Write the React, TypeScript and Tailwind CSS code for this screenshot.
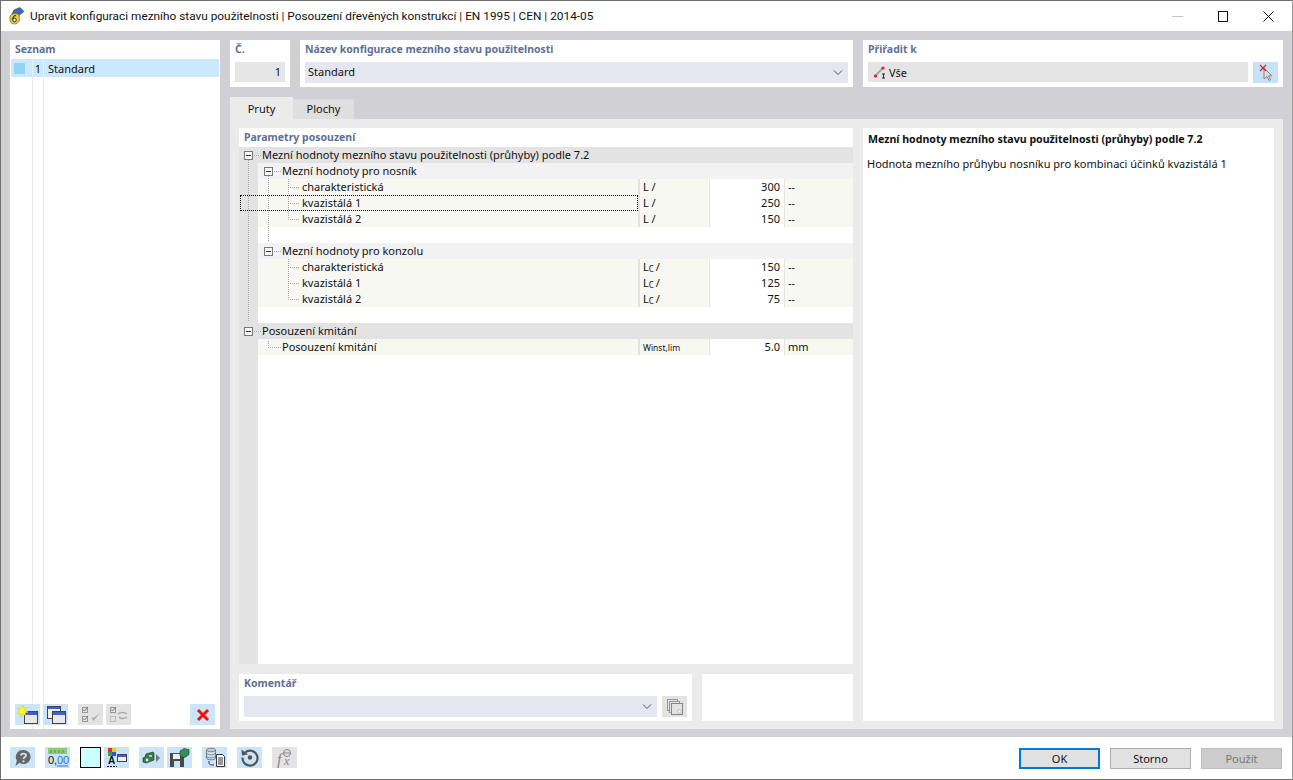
import React from "react";

const UI = "font-['Noto_Sans','Liberation_Sans',sans-serif] text-[11px] leading-4 text-[#111]";

function Label({ children, className = "" }: { children: React.ReactNode; className?: string }) {
  return <div className={"h-4 font-bold text-[10.5px] leading-4 text-[#5f6f94] " + className}>{children}</div>;
}

function Chevron() {
  return (
    <svg width="10" height="6" viewBox="0 0 10 6" className="shrink-0">
      <path d="M1 .5 5 4.500 9 .5" fill="none" stroke="#555" strokeWidth="1" />
    </svg>
  );
}

function Icon({ children, bg = "bg-[#cce4f7]" }: { children: React.ReactNode; bg?: string }) {
  return <div className={`w-[25px] h-[21px] shrink-0 flex items-center justify-center ${bg}`}>{children}</div>;
}

function Row({ kind, label, indent, sym, val, unit }: { kind: "h1" | "h2" | "r" | "blank"; label?: string; indent?: number; sym?: React.ReactNode; val?: string; unit?: string }) {
  if (kind === "blank") return <div className="h-4 ml-[19px] bg-white" />;
  if (kind === "h1") return <div className="h-4 bg-[#e3e3e3] pl-[23px] whitespace-nowrap">{label}</div>;
  if (kind === "h2") return <div className="h-4 ml-[19px] bg-[#f2f2f2] pl-[24px] whitespace-nowrap">{label}</div>;
  return (
    <div className="h-4 ml-[19px] flex bg-[#f7f8f2]">
      <div className="w-[380px] shrink-0 whitespace-nowrap" style={{ paddingLeft: indent }}>{label}</div>
      <div className="w-[71px] shrink-0 border-l-2 border-[#e3e3e3] pl-[3px] whitespace-nowrap">{sym}</div>
      <div className="w-[75px] shrink-0 bg-white border-l border-[#e3e3e3] text-right pr-[4px]">{val}</div>
      <div className="flex-1 border-l border-[#e3e3e3] pl-[3px]">{unit}</div>
    </div>
  );
}

const L = <span>L /</span>;
const Lc = <span>L<span className="text-[8px] relative top-px">C</span><span className="ml-[2px]">/</span></span>;
const W = <span className="text-[8.5px] leading-[18px] block">Winst,lim</span>;

function TreeLines() {
  const minus = (x: number, y: number) => (
    <g key={`${x}-${y}`}>
      <rect x={x + 0.5} y={y + 0.5} width="8" height="8" fill="#f4f4f4" stroke="#777" />
      <path d={`M${x + 2} ${y + 4}.5h5`} stroke="#333" />
    </g>
  );
  const c = "#a8a8a8";
  return (
    <svg className="absolute left-0 top-0 pointer-events-none" width="120" height="210">
      <path d="M9.500 13V175M29.500 29V95M49.500 32V72M49.500 112V152M29.500 194V200" stroke={c} strokeDasharray="1 1" fill="none" />
      <path d="M15 8.500h8M35 24.500h8M49 40.500h12M49 56.500h12M49 72.500h12M35 104.500h8M49 120.500h12M49 136.500h12M49 152.500h12M15 184.500h8M29 200.500h13" stroke={c} strokeDasharray="1 1" fill="none" />
      {minus(5, 4)}
      {minus(25, 20)}
      {minus(25, 100)}
      {minus(5, 180)}
    </svg>
  );
}

export default function App() {
  return (
    <div className={UI + " w-[1293px] h-[780px] flex flex-col bg-white border border-[#707070] border-r-[#9a9a9a] overflow-hidden"}>
      {/* title bar */}
      <div className="h-[30px] shrink-0 flex items-center pl-[7px] bg-white">
        <svg width="18" height="18" viewBox="0 0 18 18" className="shrink-0">
          <path d="M3.500 8 6 3l6-2.500 4 4-5 4z" fill="#3f6aa8" stroke="#2a3f66" strokeWidth=".6" />
          <path d="M2 9c2-3 7-3 9-1l.5 5c-1 3-3 4-5 4s-4-1-4.500-3z" fill="#ecc93a" stroke="#7d6a20" strokeWidth=".7" />
          <circle cx="6.500" cy="13" r="1.800" fill="#fff" stroke="#2b2b2b" strokeWidth="1" />
          <path d="M8 8.500c-2 0-3 1.500-3.200 4" fill="none" stroke="#2b2b2b" strokeWidth="1.100" />
        </svg>
        <div className="ml-[4px] text-[11.83px] font-['Roboto','Noto_Sans',sans-serif] whitespace-nowrap">
          Upravit konfiguraci mezního stavu použitelnosti | Posouzení dřevěných konstrukcí | EN 1995 | CEN | 2014-05
        </div>
        <div className="ml-auto flex items-center">
          <div className="w-[11px] h-px bg-[#c4c4c4] mr-[35px]" />
          <div className="w-[10px] h-[11px] border border-[#111] mr-[35px]" />
          <svg width="11" height="11" viewBox="0 0 11 11" className="mr-[18px]">
            <path d="M.5.5l10 10M10.500.5l-10 10" stroke="#111" fill="none" />
          </svg>
        </div>
      </div>

      {/* body */}
      <div className="h-[706px] shrink-0 bg-[#d0d0d5] pt-[9px] pl-[9px] pr-[9px] flex gap-[10px]">
        {/* list */}
        <div className="w-[210px] h-[689px] shrink-0 bg-white relative flex flex-col px-px">
          <Label className="mt-px ml-[4px] h-[18px]">Seznam</Label>
          <div className="h-[18px] flex items-center bg-[#cce8ff] relative">
            <div className="w-[11px] h-[11px] ml-[3px] bg-[#92d4f5]" />
            <div className="w-[16px] flex justify-end mt-px">1</div>
            <div className="ml-[7px] mt-px">Standard</div>
            <div className="absolute left-[21px] top-0 bottom-0 w-[12px] border-l border-r border-[#e4f3ff]" />
          </div>
          <div className="flex-1 flex pl-[21px]">
            <div className="w-[12px] border-l border-r border-[#e9e9e9]" />
          </div>
          <div className="absolute left-[5px] right-[5px] bottom-[3px] flex gap-[3px] bg-white py-px">
            <Icon>
              <svg width="24" height="20" viewBox="0 0 24 20">
                <rect x="8.500" y="6.500" width="13" height="12" fill="#e8e8e8" stroke="#444" />
                <rect x="9" y="7" width="12" height="3" fill="#3f5fcf" />
                <path d="M7 0l1 3.500 3-1-2 3 3 1.500-3 1 1 3-3-2-2 3-.5-3.500L1 8.500l2.500-2.500-2-3 3 .5z" fill="#f8f52a" stroke="#d8c820" strokeWidth=".5" />
              </svg>
            </Icon>
            <Icon>
              <svg width="24" height="20" viewBox="0 0 24 20">
                <rect x="3.500" y="1.500" width="13" height="12" fill="#eee" stroke="#444" />
                <rect x="4" y="2" width="12" height="2" fill="#3f5fcf" />
                <rect x="8.500" y="6.500" width="13" height="12" fill="#e8e8e8" stroke="#444" />
                <rect x="9" y="7" width="12" height="3" fill="#3f5fcf" />
              </svg>
            </Icon>
            <div className="w-[4px]" />
            <Icon bg="bg-[#e3e3e3]">
              <svg width="22" height="20" viewBox="0 0 22 20">
                <rect x="2.500" y="2.500" width="5" height="5" fill="none" stroke="#999" />
                <rect x="2.500" y="11.500" width="5" height="5" fill="none" stroke="#999" />
                <path d="M3 4.500l1.500 1.500L8 2M3 13.500l1.500 1.500L8 11" fill="none" stroke="#777" />
                <path d="M11 12l2.500 4L20 8l-6.500 5z" fill="#aaa" />
              </svg>
            </Icon>
            <Icon bg="bg-[#e3e3e3]">
              <svg width="22" height="20" viewBox="0 0 22 20">
                <rect x="2.500" y="2.500" width="5" height="5" fill="none" stroke="#999" />
                <rect x="2.500" y="11.500" width="5" height="5" fill="none" stroke="#bbb" />
                <path d="M3 4.500l1.500 1.500L8 2" fill="none" stroke="#777" />
                <path d="M10 9c2-2 6-2 9 0M19 12c-3 2-6 2-8 0" fill="none" stroke="#aaa" strokeWidth="1.500" />
              </svg>
            </Icon>
            <div className="flex-1" />
            <Icon>
              <svg width="14" height="14" viewBox="0 0 14 14">
                <path d="M2 2l10 10M12 2 2 12" stroke="#f01010" strokeWidth="3" />
              </svg>
            </Icon>
          </div>
        </div>

        {/* right column */}
        <div className="w-[1053px] shrink-0 flex flex-col">
          <div className="flex h-[47px] gap-[10px]">
            <div className="w-[60px] bg-white px-[5px] pt-px">
              <Label className="h-[21px]">Č.</Label>
              <div className="h-5 bg-[#e6e6e6] text-right pr-[4px] leading-[20px]">1</div>
            </div>
            <div className="w-[553px] bg-white px-[5px] pt-px">
              <Label className="h-[21px]">Název konfigurace mezního stavu použitelnosti</Label>
              <div className="h-[21px] bg-[#e6e6f0] flex items-center justify-between pl-[3px] pr-[5px]">
                <span className="mt-[-2px]">Standard</span>
                <Chevron />
              </div>
            </div>
            <div className="w-[420px] bg-white px-[5px] pt-px">
              <Label className="h-[21px]">Přiřadit k</Label>
              <div className="flex gap-[5px]">
                <div className="flex-1 h-5 bg-[#e4e4e4] flex items-center pl-[5px] gap-[2px]">
                  <svg width="14" height="14" viewBox="0 0 14 14">
                    <path d="M2 11 10 3" stroke="#9aa" strokeWidth="2" />
                    <circle cx="2.500" cy="11" r="1.600" fill="#e02020" />
                    <circle cx="10" cy="3" r="1.600" fill="#e02020" />
                    <path d="M9 9h3M10.500 9v4M9 13h3" stroke="#222" />
                  </svg>
                  <span className="mt-[2px]">Vše</span>
                </div>
                <div className="w-[25px] h-[21px] bg-[#c6e2f8] flex items-center justify-center">
                  <svg width="16" height="18" viewBox="0 0 16 18">
                    <path d="M6 4v11l3-2.500 2 4 1.500-.8-2-3.800h3.500z" fill="#ddd" stroke="#888" />
                    <path d="M2 1l6 6M8 1 2 7" stroke="#e02030" strokeWidth="1.300" />
                  </svg>
                </div>
              </div>
            </div>
          </div>

          {/* tabs */}
          <div className="flex items-end h-[32px] shrink-0">
            <div className="w-[63px] h-[22px] bg-[#ebebeb] text-center leading-[24px]">Pruty</div>
            <div className="w-[61px] h-5 bg-[#dfdfdf] text-center leading-[20px]">Plochy</div>
          </div>

          {/* tab content */}
          <div className="h-[610px] bg-[#ebebeb] flex gap-[10px] pt-[9px] pl-[9px] pr-[9px] pb-2">
            <div className="w-[614px] shrink-0 flex flex-col gap-[10px]">
              <div className="h-[536px] bg-white flex flex-col">
                <Label className="h-[19px] pl-[5px] pt-px">Parametry posouzení</Label>
                <div className="flex-1 relative flex flex-col bg-[#e3e3e3]">
                  <Row kind="h1" label="Mezní hodnoty mezního stavu použitelnosti (průhyby) podle 7.2" />
                  <Row kind="h2" label="Mezní hodnoty pro nosník" />
                  <Row kind="r" label="charakteristická" indent={44} sym={L} val="300" unit="--" />
                  <Row kind="r" label="kvazistálá 1" indent={44} sym={L} val="250" unit="--" />
                  <Row kind="r" label="kvazistálá 2" indent={44} sym={L} val="150" unit="--" />
                  <Row kind="blank" />
                  <Row kind="h2" label="Mezní hodnoty pro konzolu" />
                  <Row kind="r" label="charakteristická" indent={44} sym={Lc} val="150" unit="--" />
                  <Row kind="r" label="kvazistálá 1" indent={44} sym={Lc} val="125" unit="--" />
                  <Row kind="r" label="kvazistálá 2" indent={44} sym={Lc} val="75" unit="--" />
                  <Row kind="blank" />
                  <Row kind="h1" label="Posouzení kmitání" />
                  <Row kind="r" label="Posouzení kmitání" indent={24} sym={W} val="5.0" unit="mm" />
                  <div className="flex-1 ml-[19px] bg-white" />
                  <TreeLines />
                  <div className="absolute left-px top-[48px] w-[398px] h-4 border border-dotted border-black pointer-events-none" />
                </div>
              </div>
              <div className="flex gap-[10px] h-[47px]">
                <div className="w-[453px] bg-white px-[5px] pt-px">
                  <Label className="h-[21px]">Komentář</Label>
                  <div className="flex gap-[5px]">
                    <div className="flex-1 h-[21px] bg-[#e6e6f0] flex items-center justify-end pr-[5px]"><Chevron /></div>
                    <Icon bg="bg-[#e3e3e3]">
                      <svg width="18" height="18" viewBox="0 0 18 18">
                        <rect x="1.500" y="1.500" width="10" height="11" fill="none" stroke="#999" />
                        <rect x="3.500" y="3.500" width="10" height="11" fill="#e3e3e3" stroke="#999" />
                        <rect x="5.500" y="5.500" width="11" height="11" fill="#e3e3e3" stroke="#888" />
                        <rect x="12" y="12" width="3" height="3" fill="#fff" stroke="#999" strokeWidth=".5" />
                      </svg>
                    </Icon>
                  </div>
                </div>
                <div className="flex-1 bg-white" />
              </div>
            </div>
            <div className="flex-1 bg-white px-[5px] pt-[3px]">
              <div className="font-bold text-[10.6px] h-4">Mezní hodnoty mezního stavu použitelnosti (průhyby) podle 7.2</div>
              <div className="mt-[9px] ml-[-1px]">Hodnota mezního průhybu nosníku pro kombinaci účinků kvazistálá 1</div>
            </div>
          </div>
        </div>
      </div>

      {/* footer */}
      <div className="flex-1 flex items-start pl-[9px] pr-[10px] pt-[10px] bg-white">
        <Icon>
          <svg width="20" height="20" viewBox="0 0 20 20">
            <path d="M10.500 2a7 7 0 1 1-4 12.700L2.500 18l1.300-5.500A7 7 0 0 1 10.500 2z" fill="#666" />
            <path d="M8 7.500c0-2.500 5-2.500 5 0 0 1.800-2.500 1.800-2.500 3.500" fill="none" stroke="#cce4f7" strokeWidth="1.800" />
            <circle cx="10.500" cy="13.300" r="1.100" fill="#cce4f7" />
          </svg>
        </Icon>
        <div className="w-[10px]" />
        <Icon>
          <svg width="25" height="21" viewBox="0 0 25 21">
            <rect x="3" y="1" width="19" height="6" fill="#8fc977" />
            <path d="M6 3v3M10 3v3M14 3v3M18 3v3" stroke="#5b9a48" />
            <text x="3" y="17" fontSize="11" fontFamily="Liberation Sans" fill="#111">0,</text>
            <text x="12" y="17" fontSize="11" fontFamily="Liberation Sans" fill="#2a6fe0">00</text>
            <path d="M12 19h11" stroke="#2a6fe0" />
          </svg>
        </Icon>
        <div className="w-[10px]" />
        <div className="w-[21px] h-[21px] shrink-0 bg-[#ccffff] border border-black" />
        <div className="w-[3px]" />
        <Icon>
          <svg width="25" height="21" viewBox="0 0 25 21">
            <rect x="4" y="1" width="4" height="4" fill="#e03030" />
            <rect x="8" y="1" width="4" height="4" fill="#e0d020" />
            <rect x="4" y="5" width="4" height="4" fill="#30a040" />
            <rect x="8" y="5" width="4" height="4" fill="#3050d0" />
            <text x="4" y="17" fontSize="10" fontFamily="Liberation Sans" fontWeight="bold" fill="#111">A</text>
            <path d="M3 19.500h10" stroke="#111" strokeDasharray="2 1" />
            <rect x="13.500" y="7.500" width="9" height="7" fill="#eee" stroke="#444" />
            <rect x="14" y="8" width="8" height="2" fill="#3f5fcf" />
          </svg>
        </Icon>
        <div className="w-[10px]" />
        <Icon>
          <svg width="25" height="21" viewBox="0 0 25 21">
            <path d="M4 11l2-1 1-3 7-2 1 1v7l-8 3-3-1z" fill="#3d7a4a" stroke="#1f3f28" strokeWidth=".7" />
            <circle cx="8" cy="13" r="1.400" fill="#cfe" />
            <path d="M10 8h3v2h-3z" fill="#9fd8a8" />
            <path d="M17 7l4 4-4 4z" fill="#777" />
          </svg>
        </Icon>
        <div className="w-[3px]" />
        <Icon>
          <svg width="25" height="21" viewBox="0 0 25 21">
            <path d="M3 6h14v14H3z" fill="#4a4a4a" />
            <rect x="6" y="7" width="7" height="5" fill="#e8f2fa" />
            <rect x="7" y="14" width="6" height="6" fill="#cce4f7" />
            <path d="M13 4l4-2.500 5 1v5l-4 3-5-1z" fill="#3d8a55" stroke="#1f3f28" strokeWidth=".6" />
          </svg>
        </Icon>
        <div className="w-[10px]" />
        <Icon>
          <svg width="25" height="21" viewBox="0 0 25 21">
            <ellipse cx="9" cy="3" rx="4.500" ry="1.800" fill="#ccc" stroke="#666" strokeWidth=".7" />
            <path d="M4.500 3v8c0 2.400 9 2.400 9 0V3" fill="none" stroke="#666" strokeWidth=".8" />
            <path d="M4.500 6c0 2.400 9 2.400 9 0M4.500 9c0 2.400 9 2.400 9 0" fill="none" stroke="#666" strokeWidth=".7" />
            <path d="M7 14v2c0 1 1 2 3 2h2" fill="none" stroke="#333" />
            <path d="M14.500 7.500h6l2 2v10h-8z" fill="#fff" stroke="#333" />
            <path d="M16 11h5M16 13h5M16 15h5M16 17h5" stroke="#333" />
          </svg>
        </Icon>
        <div className="w-[10px]" />
        <Icon>
          <svg width="21" height="21" viewBox="0 0 21 21">
            <path d="M6 5.500a7.500 7.500 0 1 1-2.500 5" fill="none" stroke="#555" strokeWidth="2.200" />
            <path d="M2.500 2.500l.5 6 6-1z" fill="#555" />
            <circle cx="11" cy="10.500" r="2.200" fill="#555" />
          </svg>
        </Icon>
        <div className="w-[10px]" />
        <Icon bg="bg-[#e3e3e3]">
          <svg width="25" height="21" viewBox="0 0 25 21">
            <text x="5" y="18" fontSize="16" fontStyle="italic" fontFamily="Liberation Serif" fill="#888">f</text>
            <text x="12" y="18" fontSize="12" fontStyle="italic" fontFamily="Liberation Serif" fill="#888">x</text>
            <circle cx="15" cy="6" r="3.500" fill="none" stroke="#888" />
            <path d="M11.500 6h7" stroke="#888" />
          </svg>
        </Icon>

        <div className="ml-auto flex gap-[10px] pt-px">
          <div className="w-[81px] h-[21px] border-2 border-[#0078d7] bg-[#e1e1e1] flex items-center justify-center">OK</div>
          <div className="w-[81px] h-[21px] border border-[#adadad] bg-[#e1e1e1] flex items-center justify-center">Storno</div>
          <div className="w-[81px] h-[21px] border border-[#bfbfbf] bg-[#cccccc] text-[#777] flex items-center justify-center">Použít</div>
        </div>
      </div>
    </div>
  );
}
